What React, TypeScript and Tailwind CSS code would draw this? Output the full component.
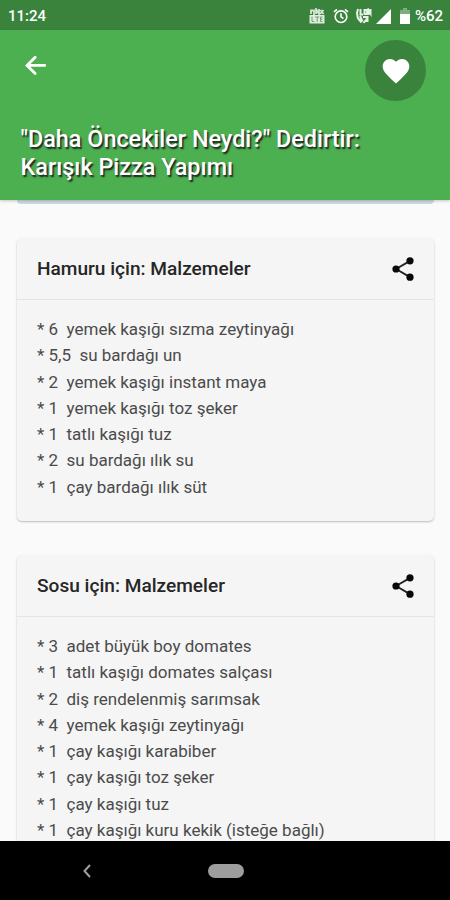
import React from 'react';

function ShareIcon() {
  return (
    <svg width="28" height="28" viewBox="0 0 24 24" fill="#090909" className="shrink-0">
      <path d="M6 12L18 5M6 12l12 7" stroke="#222" strokeWidth="1.6" />
      <circle cx="18" cy="5" r="3.1" />
      <circle cx="6" cy="12" r="3.1" />
      <circle cx="18" cy="19" r="3.1" />
    </svg>
  );
}

function StatusBar() {
  return (
    <div className="flex h-[30px] shrink-0 items-center bg-[#3a833d] pl-2 pr-[7px] pt-0.5 text-white">
      <span className="flex-1 text-[15px] font-medium leading-none">11:24</span>
      <svg width="16" height="16" viewBox="0 0 16 16" className="mr-2" fill="none" stroke="#d5e5d5">
        <path d="M2 6V2.5h3V7M7 6V1l3 5V1M11 6l3.5-4M11.5 2l3 4" strokeWidth="1.8" />
        <rect x="0.5" y="7" width="15" height="8.5" fill="#e0ece0" stroke="none" />
        <path d="M3 8.5v5h2.4M6.2 9h4M8.2 9v5M13.5 9h-2v4.5h2M11.5 11.2h2" stroke="#6da06f" strokeWidth="1" />
      </svg>
      <svg width="16" height="16" viewBox="0 0 16 16" className="mr-1.5" fill="none" stroke="#fff" strokeWidth="1.6">
        <circle cx="8" cy="8.7" r="5.8" />
        <path d="M8 5.3v3.6l2.4 1.6M1 3.8l3-2.5M15 3.8l-3-2.5" />
      </svg>
      <svg width="17" height="16" viewBox="0 0 17 16" className="mr-1" fill="none" stroke="#e8f1e8" strokeWidth="2">
        <path d="M3 1L2 5l.8 5 3.7 4.5M5.5 1v5.5H8M9.5 1v6M9 2h3v4H9.5M13.5 7V2l2 3.5V1M5 8l2.5 5.5M8.5 15l4-5M8 9h4.5v4H9.5" />
      </svg>
      <svg width="15" height="15" viewBox="0 0 15 15" className="mr-[9px]" fill="#fff"><path d="M15 0v15H0z" /></svg>
      <svg width="10" height="16" viewBox="0 0 10 16" className="mr-[5px]" fill="#fff">
        <path d="M0 2h3V0h4v2h3v4H0z" fill="#7daf7e" /><path d="M0 6h10v10H0z" />
      </svg>
      <span className="text-[15px] font-medium leading-none">%62</span>
    </div>
  );
}

function Card({ title, items, className }: { title: string; items: string[]; className: string }) {
  return (
    <section className={`ml-[17px] mr-4 shrink-0 rounded-[5px] bg-[#f5f5f5] shadow-[0_1px_2px_rgba(0,0,0,0.25)] ${className}`}>
      <div className="flex h-[62px] items-center justify-between border-b border-[#e5e5e5] pl-5 pr-[17px]">
        <h2 className="whitespace-nowrap pt-px text-[19.1px] font-medium text-[#262626]">{title}</h2>
        <ShareIcon />
      </div>
      <ul className="pl-5 pt-4 text-[17px] leading-[26.25px] text-[#4b4b4b]">
        {items.map((item) => <li key={item} className="whitespace-pre">{item}</li>)}
      </ul>
    </section>
  );
}

export default function App() {
  return (
    <div className="flex h-[900px] w-[450px] flex-col overflow-hidden bg-[#fafafa] font-['Roboto','Noto_Sans',sans-serif]">
      <StatusBar />
      <header className="z-10 h-[170px] shrink-0 bg-[#4caf50] shadow-[0_1px_3px_rgba(0,0,0,0.22)]">
        <div className="flex items-start justify-between pl-[22px] pr-6 pt-[10px]">
          <svg width="28" height="28" viewBox="0 0 24 24" className="mt-3" fill="none" stroke="#fff" strokeWidth="2.4" strokeLinecap="round">
            <path d="M19.5 11.5H5M11.3 4.5l-7 7 7 7" />
          </svg>
          <div className="flex size-[61px] items-center justify-center rounded-full bg-[#3a833d]">
            <svg width="32" height="32" viewBox="0 0 24 24" fill="#fff">
              <path d="M12 21.35l-1.45-1.32C5.4 15.36 2 12.28 2 8.5 2 5.42 4.42 3 7.5 3c1.74 0 3.41.81 4.5 2.09C13.09 3.81 14.76 3 16.5 3 19.58 3 22 5.42 22 8.5c0 3.78-3.4 6.86-8.55 11.54L12 21.35z" />
            </svg>
          </div>
        </div>
        <h1 className="ml-[20.5px] mt-[25px] whitespace-nowrap text-[23.4px] font-medium leading-[27.5px] text-white [text-shadow:1.5px_1.5px_1.5px_#222]">
          "Daha Öncekiler Neydi?" Dedirtir:<br />Karışık Pizza Yapımı
        </h1>
      </header>
      <main className="flex flex-1 flex-col overflow-hidden">
        <div className="ml-[17px] mr-4 h-1 shrink-0 rounded-b-[5px] bg-[#ccdae5]" />
        <Card
          className="mt-[34px] h-[283px]"
          title="Hamuru için: Malzemeler"
          items={['* 6  yemek kaşığı sızma zeytinyağı', '* 5,5  su bardağı un', '* 2  yemek kaşığı instant maya', '* 1  yemek kaşığı toz şeker', '* 1  tatlı kaşığı tuz', '* 2  su bardağı ılık su', '* 1  çay bardağı ılık süt']}
        />
        <Card
          className="mt-[34px] h-[320px]"
          title="Sosu için: Malzemeler"
          items={['* 3  adet büyük boy domates', '* 1  tatlı kaşığı domates salçası', '* 2  diş rendelenmiş sarımsak', '* 4  yemek kaşığı zeytinyağı', '* 1  çay kaşığı karabiber', '* 1  çay kaşığı toz şeker', '* 1  çay kaşığı tuz', '* 1  çay kaşığı kuru kekik (isteğe bağlı)']}
        />
      </main>
      <nav className="grid h-[59px] shrink-0 grid-cols-[174px_102px_174px] items-center justify-items-center bg-black">
        <svg width="8" height="14" viewBox="0 0 8 14" fill="none" stroke="#a0a0a0" strokeWidth="2"><path d="M7 1L1.5 7 7 13" /></svg>
        <div className="ml-[1px] h-[14px] w-9 rounded-full bg-[#9d9d9d]" />
      </nav>
    </div>
  );
}
